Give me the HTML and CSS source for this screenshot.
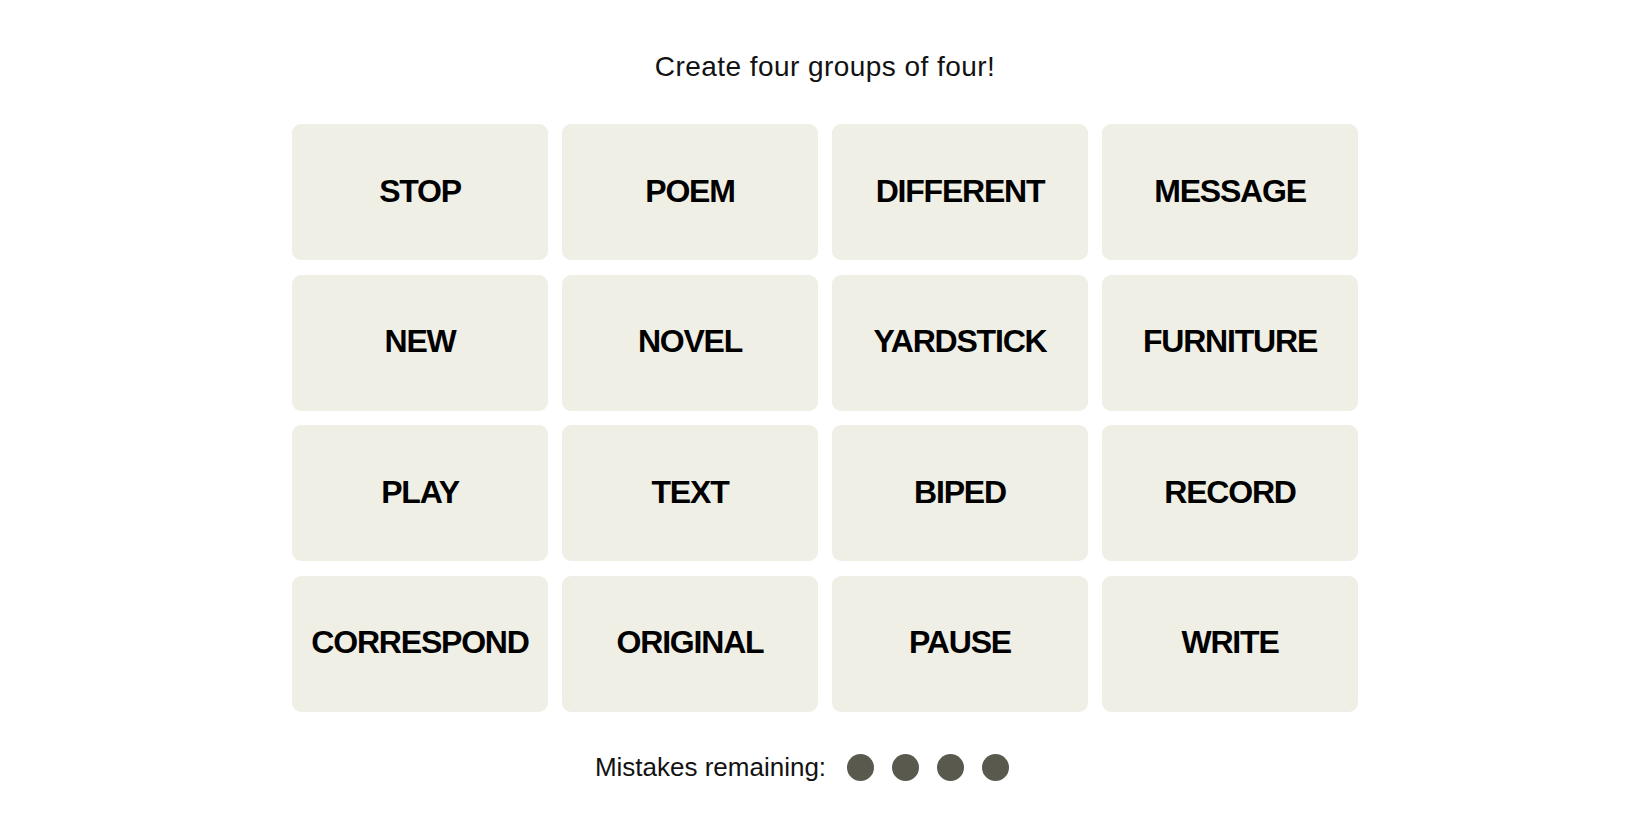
FILE: index.html
```html
<!DOCTYPE html>
<html lang="en">
<head>
<meta charset="utf-8">
<title>Connections</title>
<link rel="stylesheet" href="styles.css">
</head>
<body>
<main class="game">
  <h1 class="prompt">Create four groups of four!</h1>
  <div class="board">
    <div class="tile">STOP</div>
    <div class="tile">POEM</div>
    <div class="tile">DIFFERENT</div>
    <div class="tile">MESSAGE</div>
    <div class="tile">NEW</div>
    <div class="tile">NOVEL</div>
    <div class="tile">YARDSTICK</div>
    <div class="tile">FURNITURE</div>
    <div class="tile">PLAY</div>
    <div class="tile">TEXT</div>
    <div class="tile">BIPED</div>
    <div class="tile">RECORD</div>
    <div class="tile">CORRESPOND</div>
    <div class="tile">ORIGINAL</div>
    <div class="tile">PAUSE</div>
    <div class="tile">WRITE</div>
  </div>
  <div class="mistakes">
    <span class="mistakes-label">Mistakes remaining:</span>
    <span class="dots">
      <span class="dot"></span>
      <span class="dot"></span>
      <span class="dot"></span>
      <span class="dot"></span>
    </span>
  </div>
</main>
</body>
</html>
```
FILE: styles.css
```css
html, body {
  margin: 0;
  padding: 0;
  background: #ffffff;
}

body {
  font-family: "Liberation Sans", Arial, sans-serif;
  color: #121212;
}

.game {
  display: flex;
  flex-direction: column;
  align-items: center;
  padding-top: 51px;
}

.prompt {
  margin: 0;
  font-size: 28px;
  line-height: 32px;
  font-weight: 400;
  letter-spacing: 0.45px;
  color: #121212;
}

.board {
  margin-top: 41px;
  display: grid;
  grid-template-columns: repeat(4, 256px);
  grid-auto-rows: 136px;
  gap: 14.5px 14px;
}

.tile {
  background: #efefe6;
  border-radius: 9px;
  display: flex;
  align-items: center;
  justify-content: center;
  font-weight: 700;
  font-size: 32px;
  letter-spacing: -1.2px;
  color: #000000;
  padding-bottom: 2px;
}

.mistakes {
  margin-top: 42px;
  display: flex;
  align-items: center;
  height: 27px;
  padding-right: 46px;
}

.mistakes-label {
  font-size: 26px;
  color: #121212;
}

.dots {
  display: flex;
  gap: 18px;
  margin-left: 21px;
}

.dot {
  width: 27px;
  height: 27px;
  border-radius: 50%;
  background: #5a594e;
}
```
